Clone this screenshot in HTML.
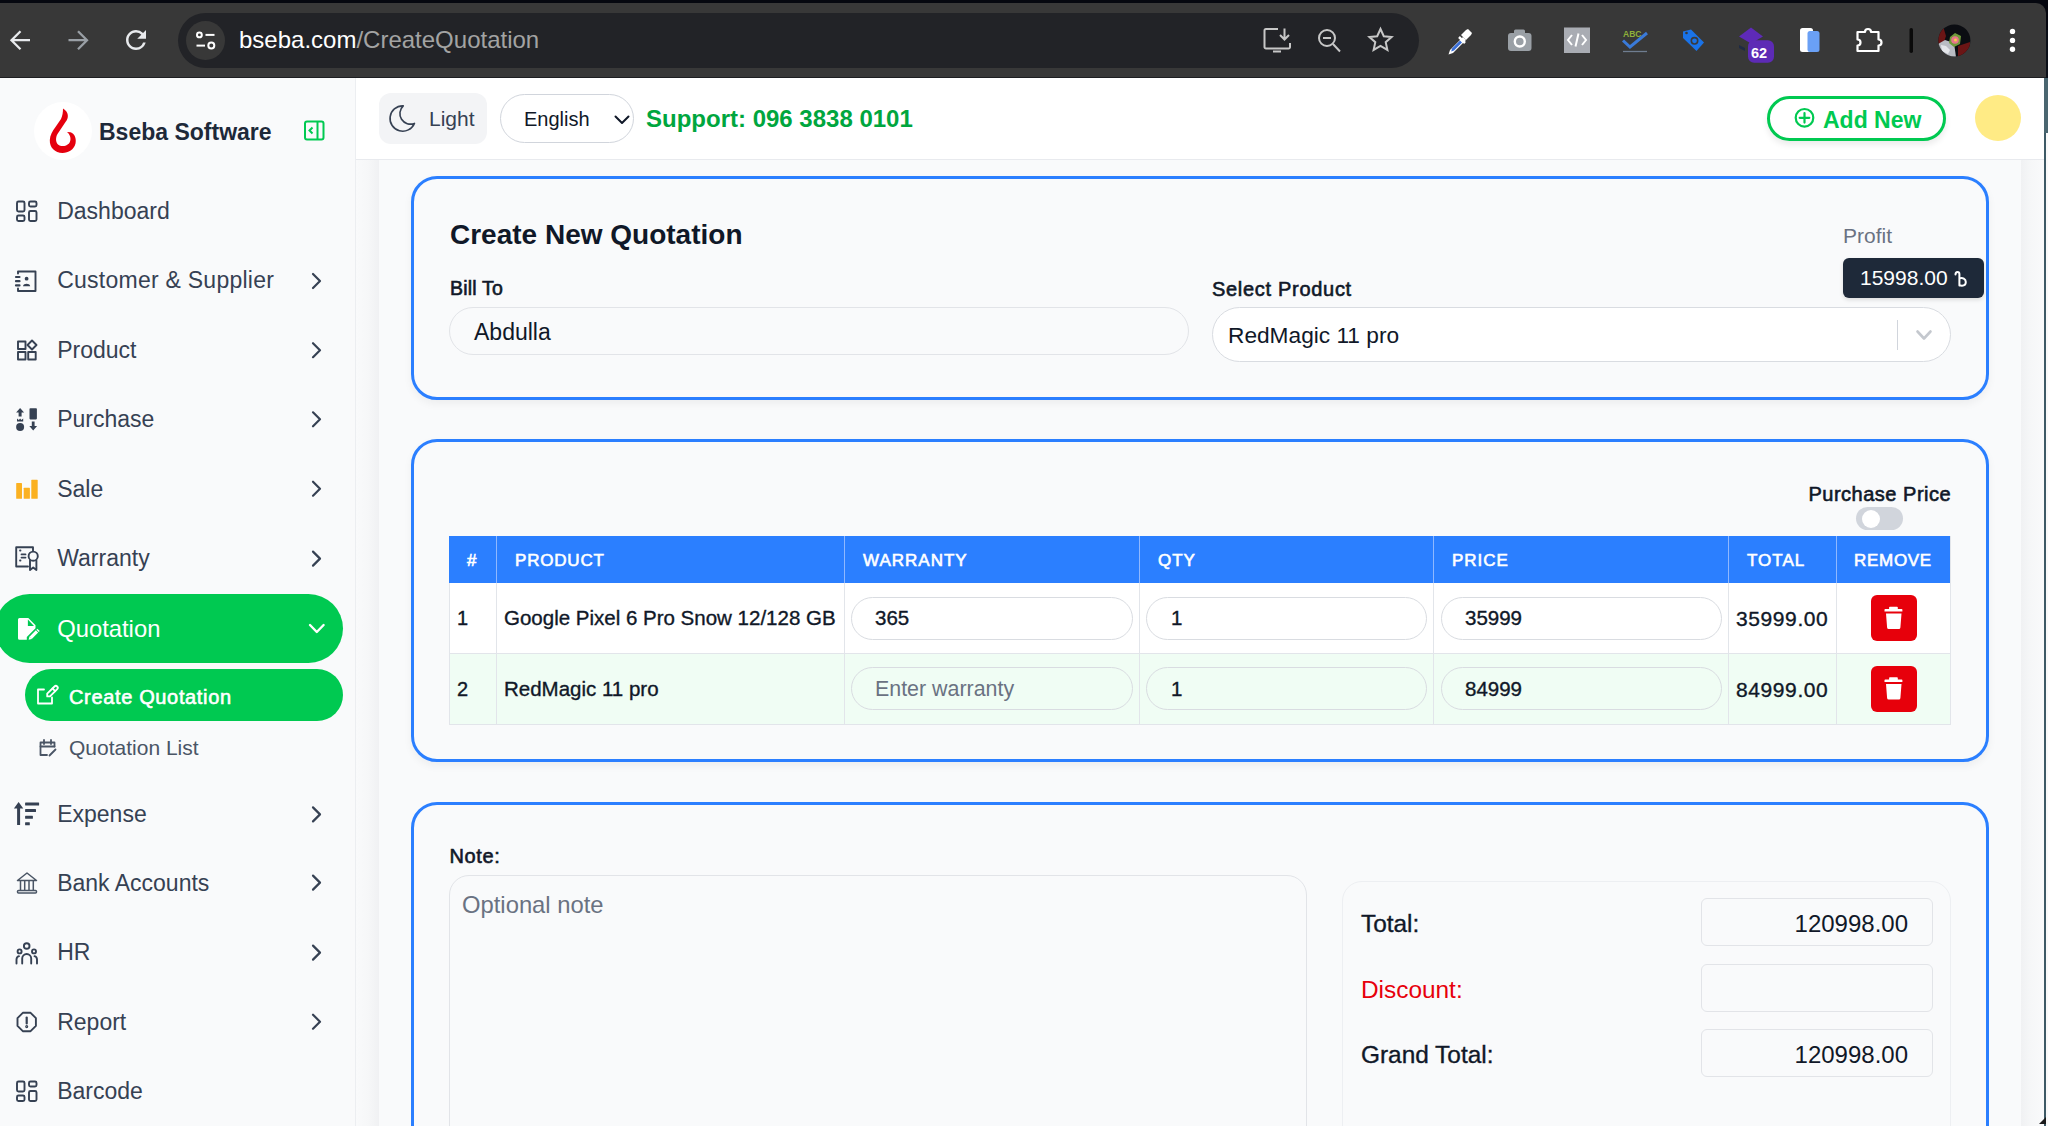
<!DOCTYPE html>
<html><head><meta charset="utf-8">
<style>
*{box-sizing:border-box;margin:0;padding:0}
html,body{width:2048px;height:1126px;overflow:hidden}
body{position:relative;background:#f9fafb;font-family:"Liberation Sans",sans-serif;color:#101828}
.a{position:absolute}
.t{position:absolute;white-space:nowrap;line-height:1}
.m{-webkit-text-stroke:0.35px currentColor}
.sb{-webkit-text-stroke:0.6px currentColor;font-weight:normal}
svg{position:absolute;overflow:visible}
</style></head><body>

<!-- ===== Browser chrome ===== -->
<div class="a" style="left:0;top:0;width:2048px;height:4px;background:#05070f"></div>
<div class="a" style="left:2045px;top:0;width:3px;height:78px;background:#0b0f18"></div>
<div class="a" style="left:2020px;top:0;width:28px;height:30px;background:#05070f"></div>
<div class="a" style="left:0;top:3px;width:2046px;height:75px;background:#383838;border-top-right-radius:10px;border-bottom:1px solid #1d1e21"></div>
<div class="a" style="left:178px;top:13px;width:1241px;height:55px;background:#222327;border-radius:27.5px"></div>
<div class="a" style="left:186px;top:21px;width:39px;height:39px;background:#383838;border-radius:50%"></div>
<svg style="left:0;top:0" width="2048" height="78" viewBox="0 0 2048 78">
<g stroke="#e8eaed" stroke-width="2.3" fill="none" stroke-linecap="butt">
<path d="M30 40.2H12.5M20.5 31.2L11.5 40.2L20.5 49.2"/>
</g>
<g stroke="#9aa0a6" stroke-width="2.3" fill="none"><path d="M68.5 40.2H86M78 31.2L87 40.2L78 49.2"/></g>
<g transform="translate(121,25) scale(1.25)"><path fill="#e8eaed" d="M17.65 6.35A7.958 7.958 0 0 0 12 4c-4.42 0-7.99 3.58-7.99 8s3.57 8 7.99 8c3.73 0 6.84-2.55 7.73-6h-2.08A5.99 5.99 0 0 1 12 18c-3.31 0-6-2.69-6-6s2.69-6 6-6c1.66 0 3.14.69 4.22 1.78L13 11h7V4l-2.35 2.35z"/></g>
<g stroke="#fff" stroke-width="2" fill="none">
<circle cx="199.4" cy="34.9" r="2.4"/><path d="M205.5 34.9H214.5"/>
<path d="M196.5 45.6H205"/><circle cx="211.3" cy="45.6" r="3"/>
</g>
<g stroke="#c7c7c7" stroke-width="2" fill="none">
<path d="M1278 29H1266a1.5 1.5 0 0 0-1.5 1.5v16.5a1.5 1.5 0 0 0 1.5 1.5h22.5a1.5 1.5 0 0 0 1.5-1.5V43"/>
<path d="M1284.5 28.5v11M1280 35l4.5 4.5L1289 35"/><path d="M1273 51.5h8"/>
<circle cx="1327" cy="38" r="8"/><path d="M1323 38h8M1333 44l7 7.5"/>
<path d="M1380.5 29l3.3 7.2l7.8 .8l-5.9 5.2l1.7 7.7l-6.9 -4l-6.9 4l1.7 -7.7l-5.9 -5.2l7.8 -.8z"/>
</g>
<g>
<path d="M1450 50l13-13 3 3-13 13-4.5 1.5z" fill="#fff"/>
<path d="M1452 48.5l8-8 2 2-8 8-2.8 .9z" fill="#3b6fd8"/>
<path d="M1461 35l5-5 2-1 4 4-1 2-5 5z" fill="#fff"/><path d="M1459 37l6 6" stroke="#fff" stroke-width="2.5"/>
</g>
<g><rect x="1508" y="33" width="23.5" height="18" rx="3" fill="#9aa0a6"/><rect x="1514" y="29.5" width="11" height="5" rx="1.5" fill="#9aa0a6"/><circle cx="1519.8" cy="41.5" r="5" fill="none" stroke="#fff" stroke-width="2.4"/></g>
<g><rect x="1564" y="27.5" width="26" height="25.5" fill="#a9acb3"/><path d="M1572 35l-4 5 4 5M1582 35l4 5-4 5M1578.5 33.5l-3 13" stroke="#fff" stroke-width="2" fill="none"/></g>
<g><text x="1623" y="37" font-family="Liberation Sans" font-weight="bold" font-size="8.5" fill="#8fb03a">ABC</text><path d="M1623 40.5l7 6.5 17-14" stroke="#3a7ad8" stroke-width="3" fill="none"/><path d="M1623 51.5h24" stroke="#6f7d90" stroke-width="1.3"/></g>
<g><path d="M1683 31.5l8-2 13 13-7.5 8.5-13.5-13z" fill="#1a73e8"/><circle cx="1694.5" cy="40.8" r="3.2" fill="none" stroke="#3a3a3a" stroke-width="1.6"/><circle cx="1686.5" cy="33" r="1.3" fill="#3a3a3a"/></g>
<g><path d="M1739 36.5l12-9l12 9l-12 7z" fill="#5e2ab8"/><path d="M1739 45l6 3v3l-6-3z" fill="#1f2a44"/><rect x="1748" y="40.3" width="26" height="22.5" rx="6" fill="#5d2bb5"/><text x="1751" y="58" font-family="Liberation Sans" font-weight="bold" font-size="14.5" fill="#fff">62</text></g>
<g><rect x="1800" y="28" width="13" height="24" rx="2.5" fill="#fff"/><rect x="1807.5" y="31" width="12" height="21" rx="2.5" fill="#6aa0f5"/></g>
<g><path d="M1857.5 32h7.5a3 3 0 0 1 6 0h7.5v7.5a3 3 0 0 1 0 6V51h-21v-5.5a3 3 0 0 0 0-6z" fill="none" stroke="#fff" stroke-width="2.2" stroke-linejoin="round"/></g>
<rect x="1909.5" y="28" width="3.5" height="25" rx="1.7" fill="#0a0a0a"/>
<g><defs><clipPath id="avc"><circle cx="1954.4" cy="40.4" r="16"/></clipPath></defs><g clip-path="url(#avc)">
<rect x="1938" y="24" width="33" height="33" fill="#0b0d12"/>
<path d="M1937 30l6-4 3 10-2 6-7 2z" fill="#6b1515"/>
<path d="M1958 46l12-4v15h-12z" fill="#6b1515"/>
<path d="M1938 44l7-4 9 3 2 14h-18z" fill="#b9bcc3"/>
<path d="M1941 45l5 1 4 4-2 4-6-3z" fill="#e4e6ea"/>
<path d="M1950 37l5-4 6 3-1 8-6 3-5-4z" fill="#6f9a3a"/>
<circle cx="1955" cy="40" r="3.8" fill="#e9758a"/><circle cx="1955.5" cy="40" r="1.5" fill="#f4d24a"/>
</g></g>
<g fill="#fff"><circle cx="2012.5" cy="31.4" r="2.7"/><circle cx="2012.5" cy="40.4" r="2.7"/><circle cx="2012.5" cy="49.3" r="2.7"/></g>
</svg>
<div class="t" style="left:239px;top:28px;font-size:24px;color:#fff">bseba.com<span style="color:#a3a3a3">/CreateQuotation</span></div>

<!-- ===== Page frame ===== -->
<div class="a" style="left:0;top:78px;width:356px;height:1048px;background:#f9fafb;border-right:1.5px solid #eceef1"></div>
<div class="a" style="left:356px;top:78px;width:1688px;height:82px;background:#fff;border-bottom:1px solid #e8eaee"></div>
<div class="a" style="left:356px;top:160px;width:23px;height:966px;background:linear-gradient(90deg,#f9fafb 0%,#f6f7f8 55%,#f0f1f3 100%)"></div>
<div class="a" style="left:2021px;top:160px;width:23px;height:966px;background:linear-gradient(90deg,#f0f1f3 0%,#f6f7f8 45%,#f9fafb 100%)"></div>
<div class="a" style="left:2044px;top:78px;width:2px;height:1048px;background:#3e5a66"></div>
<div class="a" style="left:2044px;top:78px;width:4px;height:55px;background:#4a6670"></div>
<div class="a" style="left:2046px;top:133px;width:2px;height:993px;background:#fafafa"></div>

<!-- ===== Header ===== -->
<div class="a" style="left:379px;top:93px;width:108px;height:51px;background:#f3f4f6;border-radius:12px"></div>
<div class="t" style="left:429px;top:108px;font-size:21px;color:#364153">Light</div>
<div class="a" style="left:500px;top:94px;width:134px;height:49px;background:#fff;border:1.5px solid #d1d5dc;border-radius:25px"></div>
<div class="t" style="left:524px;top:109px;font-size:20px;color:#101828">English</div>
<div class="t" style="left:646px;top:106.5px;font-size:24px;font-weight:bold;color:#00a63e">Support: 096 3838 0101</div>
<div class="a" style="left:1767px;top:96px;width:179px;height:45px;border:3px solid #00c951;border-radius:23px;background:#fff;box-shadow:0 4px 6px rgba(0,0,0,.08)"></div>
<div class="t" style="left:1823px;top:108.5px;font-size:23px;font-weight:bold;color:#00c951">Add New</div>
<div class="a" style="left:1975px;top:95px;width:46px;height:46px;background:#ffeb85;border-radius:50%"></div>

<!-- ===== Sidebar ===== -->
<div class="a" style="left:34px;top:102px;width:58px;height:58px;background:#fff;border-radius:50%"></div>
<div class="t" style="left:99px;top:120.5px;font-size:23px;font-weight:bold;color:#1e2939">Bseba Software</div>

<div class="t" style="left:57.2px;top:200.3px;font-size:23px;color:#364153">Dashboard</div>
<div class="t" style="left:57.2px;top:269.4px;font-size:23px;letter-spacing:0.25px;color:#364153">Customer &amp; Supplier</div>
<div class="t" style="left:57.2px;top:339px;font-size:23px;color:#364153">Product</div>
<div class="t" style="left:57.2px;top:408px;font-size:23px;color:#364153">Purchase</div>
<div class="t" style="left:57.2px;top:477.5px;font-size:23px;color:#364153">Sale</div>
<div class="t" style="left:57.2px;top:547.4px;font-size:23px;color:#364153">Warranty</div>

<div class="a" style="left:-5px;top:594px;width:348px;height:69px;background:#00c951;border-radius:35px"></div>
<div class="t" style="left:57.2px;top:617px;font-size:23.8px;color:#fff">Quotation</div>
<div class="a" style="left:25px;top:669px;width:318px;height:52px;background:#00c951;border-radius:26px"></div>
<div class="t sb" style="left:69px;top:686.5px;font-size:20px;letter-spacing:0.65px;color:#fff">Create Quotation</div>
<div class="t" style="left:69px;top:737px;font-size:21px;color:#4a5565">Quotation List</div>

<div class="t" style="left:57.2px;top:803px;font-size:23px;color:#364153">Expense</div>
<div class="t" style="left:57.2px;top:871.9px;font-size:23px;color:#364153">Bank Accounts</div>
<div class="t" style="left:57.2px;top:941.4px;font-size:23px;color:#364153">HR</div>
<div class="t" style="left:57.2px;top:1010.5px;font-size:23px;color:#364153">Report</div>
<div class="t" style="left:57.2px;top:1079.6px;font-size:23px;color:#364153">Barcode</div>

<svg style="left:0;top:78px" width="356" height="1048" viewBox="0 78 356 1048">
<path fill="#e5000e" d="M63 108.5C69 112 69 118 65.5 122L57.5 134C55.5 137.5 55.5 142 58 144.5C61 147 66 146.5 69 143.5C71.5 140.5 71 135 67 132L70.5 132.3C75 134 76.5 139 75.5 143.5C74 149.5 68.5 153 62.5 153C55 153 49.5 147.5 49.8 140C50 135 52.5 131 55.5 127L61 119C62.5 116 63 112 63 108.5Z"/>
<g stroke="#00c951" stroke-width="2" fill="none"><rect x="305" y="121.5" width="18.5" height="18" rx="2"/><path d="M317.5 121.5v18M312.5 127.5l-3 3 3 3"/></g>
<g stroke="#364153" stroke-width="1.9" fill="none" stroke-linejoin="round" stroke-linecap="round">
<!-- dashboard -->
<rect x="17" y="201.5" width="7.5" height="10" rx="1.5"/><rect x="29" y="201.5" width="7.5" height="5" rx="1.5"/>
<rect x="17" y="215.5" width="7.5" height="5.5" rx="1.5"/><rect x="29" y="211" width="7.5" height="10" rx="1.5"/>
<!-- customer -->
<path d="M18 273.5V271.5h17.5v19.5H18V288.5"/><path d="M16 277h3.5M16 281.2h3.5M16 285.4h3.5" stroke-width="2.2"/>
<circle cx="26.6" cy="278.7" r="1.9" fill="#364153" stroke="none"/><path d="M23 286.2c.6-3.2 6.6-3.2 7.2 0z" fill="#364153" stroke="none"/>
<!-- product -->
<rect x="18" y="341.5" width="7.5" height="7.5"/><path d="M32 340.5l4.5 4.5-4.5 4.5-4.5-4.5z"/>
<rect x="18" y="352" width="7.5" height="7.5"/><rect x="28.2" y="352" width="7.5" height="7.5"/>
<!-- warranty -->
<path d="M28 566.5H16.2V547.2h16.8v3.5"/><path d="M20 550.5h.5M20 560.5h.5M21.5 554.4h4M21.5 557.6h4" stroke-width="1.8"/>
<circle cx="33.2" cy="556.2" r="4.6"/><path d="M30 560.5v9.5l3.2-2.5 3.2 2.5v-9.5"/>
<!-- report -->
<path d="M22.8 1012.8h7.8l5.3 5.3v7.8l-5.3 5.3h-7.8l-5.3-5.3v-7.8z"/><path d="M26.7 1017.5v6" stroke-width="2.2"/><circle cx="26.7" cy="1026.6" r=".6" stroke-width="1.9"/>
<!-- barcode -->
<rect x="17" y="1081.5" width="7.5" height="10" rx="1.5"/><rect x="29" y="1081.5" width="7.5" height="5" rx="1.5"/>
<rect x="17" y="1095.5" width="7.5" height="5.5" rx="1.5"/><rect x="29" y="1091" width="7.5" height="10" rx="1.5"/>
</g>
<!-- purchase (filled) -->
<g fill="#364153">
<path d="M20.1 408l4 4.5h-2.5v4h-3v-4h-2.5z"/><path d="M17 418.5l1.8 1.5 1.3-1.5 1.3 1.5 1.8-1.5v3h-6.2z"/><circle cx="20.1" cy="427" r="4"/>
<rect x="29.5" y="408.2" width="7.4" height="11.2" rx=".8"/><path d="M31.8 421.5h2.8v4.5h2.5l-3.9 4.6-3.9-4.6h2.5z"/>
</g>
<!-- sale -->
<g fill="#fbb121"><rect x="16.2" y="483" width="5.8" height="15.8" rx=".6"/><rect x="23.7" y="487.7" width="6.2" height="11.1" rx=".6"/><rect x="31.3" y="479.8" width="6.4" height="19" rx=".6"/></g>
<!-- quotation (white filled) -->
<path fill="#fff" d="M19.5 618H28.3L35.5 625.2V628.3L26.8 637V639.7H19.5A1.5 1.5 0 0 1 18 638.2V619.5A1.5 1.5 0 0 1 19.5 618Z"/>
<path fill="#00c951" d="M27.9 619.6V625.9H34Z"/>
<path d="M30.6 637.8l6.4-6.4" stroke="#fff" stroke-width="3.3"/>
<path fill="#fff" d="M28.6 639.8l.9-3.2 2.3 2.3z"/>
<path d="M37.6 630.8l.9-.9" stroke="#fff" stroke-width="3.3"/>
<!-- create quotation -->
<g stroke="#fff" stroke-width="1.8" fill="none" stroke-linejoin="round" stroke-linecap="round">
<path d="M44 689.5h-6v14h14v-6"/><path d="M54.5 686.5a1.9 1.9 0 0 1 2.7 2.7l-7.2 7.2h-2.8v-2.8z"/><path d="M52.5 688.5l2.7 2.7"/>
</g>
<!-- quotation list -->
<g stroke="#4a5565" stroke-width="1.8" fill="none" stroke-linejoin="round" stroke-linecap="round">
<path d="M47 755H40.5V742.5h14v4"/><path d="M40.5 746.5h14M44 740v4M51 740v4"/><path d="M49.5 755.5l6-6"/>
</g>
<!-- expense -->
<g fill="#364153"><path d="M18.6 802l4.7 6.5h-3.2v16.4h-3V808.5h-3.2z"/><rect x="25.1" y="802.5" width="14" height="3" rx=".5"/><rect x="25.1" y="809.1" width="10.9" height="3" rx=".5"/><rect x="25.1" y="815.8" width="7.8" height="3" rx=".5"/><rect x="25.1" y="822.3" width="4.7" height="3" rx=".5"/></g>
<!-- bank -->
<g stroke="#4a5565" stroke-width="1.5" fill="none" stroke-linejoin="round">
<path d="M17.5 880.5h19l-9.5-7.5z"/><path d="M20.5 880.5v10M24.7 880.5v10M29 880.5v10M33.3 880.5v10"/><rect x="17.5" y="890.5" width="19" height="2.5" rx="1"/>
</g>
<!-- hr -->
<g stroke="#364153" stroke-width="1.9" fill="none" stroke-linecap="round">
<circle cx="26.7" cy="946" r="2.8"/><circle cx="19.6" cy="951.4" r="2"/><circle cx="34" cy="951.4" r="2"/>
<path d="M22.2 963.5v-5a4.5 4.5 0 0 1 9 0v5"/><path d="M16.5 963.5v-4a3.5 3.5 0 0 1 2.5-3.3M37 963.5v-4a3.5 3.5 0 0 0-2.5-3.3"/>
</g>
<!-- chevrons -->
<g stroke="#364153" stroke-width="2.2" fill="none" stroke-linecap="round" stroke-linejoin="round">
<path d="M313 274l7 7-7 7"/><path d="M313 343.2l7 7-7 7"/><path d="M313 412.3l7 7-7 7"/><path d="M313 481.7l7 7-7 7"/><path d="M313 551.6l7 7-7 7"/>
<path d="M313 807.4l7 7-7 7"/><path d="M313 875.6l7 7-7 7"/><path d="M313 945.6l7 7-7 7"/><path d="M313 1014.7l7 7-7 7"/>
</g>
<path d="M310 625l6.8 7 6.8-7" stroke="#fff" stroke-width="2.4" fill="none" stroke-linecap="round" stroke-linejoin="round"/>
</svg>
<!-- ===== Card 1 ===== -->
<div class="a" style="left:411px;top:176px;width:1578px;height:224px;border:3px solid #2b7fff;border-radius:26px;background:#f9fafb;box-shadow:0 4px 8px rgba(0,0,0,.05)"></div>
<div class="t" style="left:450px;top:221px;font-size:28px;font-weight:bold;color:#101828">Create New Quotation</div>
<div class="t sb" style="left:450px;top:279.2px;font-size:19.5px;letter-spacing:0.2px;color:#101828">Bill To</div>
<div class="a" style="left:449px;top:307px;width:740px;height:48px;border:1px solid #e2e4e8;border-radius:24px;background:#f9fafb"></div>
<div class="t" style="left:474px;top:320.5px;font-size:23px;color:#101828">Abdulla</div>
<div class="t sb" style="left:1212px;top:278.5px;font-size:20px;letter-spacing:0.7px;color:#101828">Select Product</div>
<div class="a" style="left:1212px;top:307px;width:739px;height:55px;border:1px solid #d9dce1;border-radius:28px;background:#fff"></div>
<div class="t" style="left:1228px;top:324px;font-size:22.7px;color:#101828">RedMagic 11 pro</div>
<div class="a" style="left:1897px;top:320px;width:1px;height:30px;background:#d1d5dc"></div>
<div class="t" style="left:1843px;top:225px;font-size:21px;color:#6a7282">Profit</div>
<div class="a" style="left:1843px;top:258px;width:141px;height:40px;background:#1e2939;border-radius:6px;box-shadow:0 2px 4px rgba(0,0,0,.12)"></div>
<div class="t" style="left:1860px;top:267px;font-size:21px;color:#fff">15998.00</div>
<svg style="left:1953px;top:270px" width="16" height="20" viewBox="0 0 16 20"><path d="M2.5 4.5c0-1.6 .9-2.5 2-2.5c1.1 0 1.9 .8 1.9 2V15.5M6.4 8.5c3.2-1.2 6.4 .5 6.4 3.6c0 2.4-1.8 3.6-3.8 3.6c-1.3 0-2-.2-2.6-.5" stroke="#fff" stroke-width="2" fill="none" stroke-linecap="round"/></svg>

<!-- ===== Card 2 ===== -->
<div class="a" style="left:411px;top:439px;width:1578px;height:323px;border:3px solid #2b7fff;border-radius:26px;background:#f9fafb;box-shadow:0 4px 8px rgba(0,0,0,.05)"></div>
<div class="t sb" style="left:1808.5px;top:484px;font-size:20px;letter-spacing:0.5px;color:#101828">Purchase Price</div>
<div class="a" style="left:1856px;top:507px;width:47px;height:23px;background:#d1d5dc;border-radius:12px"></div>
<div class="a" style="left:1862px;top:509.5px;width:18px;height:18px;background:#fff;border-radius:50%"></div>

<div class="a" style="left:449px;top:536px;width:1502px;height:47px;background:#2b7fff"></div>
<div class="a" style="left:449px;top:583px;width:1502px;height:71px;background:#fff"></div>
<div class="a" style="left:449px;top:654px;width:1502px;height:71px;background:#f0fdf4"></div>
<div class="a" style="left:449px;top:653px;width:1502px;height:1px;background:#e2e5ea"></div>
<div class="a" style="left:449px;top:724px;width:1502px;height:1px;background:#e2e5ea"></div>
<div class="a" style="left:449px;top:583px;width:1px;height:142px;background:#e2e5ea"></div>
<div class="a" style="left:1950px;top:536px;width:1px;height:189px;background:#e2e5ea"></div>
<div class="a" style="left:496px;top:536px;width:1px;height:47px;background:#8fb8ff"></div>
<div class="a" style="left:496px;top:583px;width:1px;height:142px;background:#e2e5ea"></div>
<div class="a" style="left:844px;top:536px;width:1px;height:47px;background:#8fb8ff"></div>
<div class="a" style="left:844px;top:583px;width:1px;height:142px;background:#e2e5ea"></div>
<div class="a" style="left:1139px;top:536px;width:1px;height:47px;background:#8fb8ff"></div>
<div class="a" style="left:1139px;top:583px;width:1px;height:142px;background:#e2e5ea"></div>
<div class="a" style="left:1433px;top:536px;width:1px;height:47px;background:#8fb8ff"></div>
<div class="a" style="left:1433px;top:583px;width:1px;height:142px;background:#e2e5ea"></div>
<div class="a" style="left:1728px;top:536px;width:1px;height:47px;background:#8fb8ff"></div>
<div class="a" style="left:1728px;top:583px;width:1px;height:142px;background:#e2e5ea"></div>
<div class="a" style="left:1836px;top:536px;width:1px;height:47px;background:#8fb8ff"></div>
<div class="a" style="left:1836px;top:583px;width:1px;height:142px;background:#e2e5ea"></div>
<div class="t sb" style="left:467px;top:552px;font-size:17px;letter-spacing:1px;color:#fff">#</div>
<div class="t sb" style="left:515px;top:552px;font-size:17px;letter-spacing:0.8px;color:#fff">PRODUCT</div>
<div class="t sb" style="left:863px;top:552px;font-size:17px;letter-spacing:1px;color:#fff">WARRANTY</div>
<div class="t sb" style="left:1158px;top:552px;font-size:17px;letter-spacing:1px;color:#fff">QTY</div>
<div class="t sb" style="left:1452px;top:552px;font-size:17px;letter-spacing:1px;color:#fff">PRICE</div>
<div class="t sb" style="left:1747px;top:552px;font-size:17px;letter-spacing:1px;color:#fff">TOTAL</div>
<div class="t sb" style="left:1854px;top:552px;font-size:17px;letter-spacing:0.7px;color:#fff">REMOVE</div>
<div class="a" style="left:851px;top:597px;width:282px;height:43px;border:1px solid #d9dce1;border-radius:22px;background:#fff"></div>
<div class="a" style="left:1146px;top:597px;width:281px;height:43px;border:1px solid #d9dce1;border-radius:22px;background:#fff"></div>
<div class="a" style="left:1441px;top:597px;width:281px;height:43px;border:1px solid #d9dce1;border-radius:22px;background:#fff"></div>
<div class="a" style="left:851px;top:667px;width:282px;height:43px;border:1px solid #d9dce1;border-radius:22px;background:transparent"></div>
<div class="a" style="left:1146px;top:667px;width:281px;height:43px;border:1px solid #d9dce1;border-radius:22px;background:transparent"></div>
<div class="a" style="left:1441px;top:667px;width:281px;height:43px;border:1px solid #d9dce1;border-radius:22px;background:transparent"></div>
<div class="t m" style="left:457px;top:608px;font-size:20px;color:#101828">1</div>
<div class="t m" style="left:504px;top:608px;font-size:20.5px;color:#101828">Google Pixel 6 Pro Snow 12/128 GB</div>
<div class="t m" style="left:875px;top:608px;font-size:20.5px;color:#101828">365</div>
<div class="t m" style="left:1171px;top:608px;font-size:20.5px;color:#101828">1</div>
<div class="t m" style="left:1465px;top:608px;font-size:20.5px;color:#101828">35999</div>
<div class="t m" style="left:1736px;top:608px;font-size:21px;letter-spacing:0.6px;color:#101828">35999.00</div>
<div class="t m" style="left:457px;top:679px;font-size:20px;color:#101828">2</div>
<div class="t m" style="left:504px;top:679px;font-size:20.5px;color:#101828">RedMagic 11 pro</div>
<div class="t" style="left:875px;top:679px;font-size:21.4px;color:#6a7282">Enter warranty</div>
<div class="t m" style="left:1171px;top:679px;font-size:20.5px;color:#101828">1</div>
<div class="t m" style="left:1465px;top:679px;font-size:20.5px;color:#101828">84999</div>
<div class="t m" style="left:1736px;top:679px;font-size:21px;letter-spacing:0.6px;color:#101828">84999.00</div>
<div class="a" style="left:1871px;top:595px;width:46px;height:46px;background:#e7000b;border-radius:6px"></div>
<div class="a" style="left:1871px;top:666px;width:46px;height:46px;background:#e7000b;border-radius:6px"></div>

<!-- ===== Card 3 ===== -->
<div class="a" style="left:411px;top:802px;width:1578px;height:400px;border:3px solid #2b7fff;border-radius:26px;background:#f9fafb"></div>
<div class="t sb" style="left:449.5px;top:846px;font-size:20px;letter-spacing:0.6px;color:#101828">Note:</div>
<div class="a" style="left:449px;top:875px;width:858px;height:300px;border:1px solid #e2e4e8;border-radius:20px;background:#f9fafb"></div>
<div class="t" style="left:462px;top:893px;font-size:23.8px;color:#6a7282">Optional note</div>
<div class="a" style="left:1342px;top:881px;width:609px;height:300px;border:1px solid #edeff2;border-radius:20px;background:#f9fafb"></div>
<div class="t m" style="left:1361px;top:912px;font-size:24.4px;color:#101828">Total:</div>
<div class="a" style="left:1701px;top:898px;width:232px;height:48px;border:1px solid #e2e4e8;border-radius:6px;background:#f9fafb"></div>
<div class="t" style="left:1700px;width:208px;text-align:right;top:912px;font-size:24px;color:#101828">120998.00</div>
<div class="t" style="left:1361px;top:978px;font-size:24.4px;color:#e7000b">Discount:</div>
<div class="a" style="left:1701px;top:964px;width:232px;height:48px;border:1px solid #e2e4e8;border-radius:6px;background:#f9fafb"></div>
<div class="t m" style="left:1361px;top:1043px;font-size:24.4px;color:#101828">Grand Total:</div>
<div class="a" style="left:1701px;top:1029px;width:232px;height:48px;border:1px solid #e2e4e8;border-radius:6px;background:#f9fafb"></div>
<div class="t" style="left:1700px;width:208px;text-align:right;top:1043px;font-size:24px;color:#101828">120998.00</div>

<svg style="left:356px;top:78px" width="1692" height="1048" viewBox="356 78 1692 1048">
<g transform="translate(385.8,101.6) scale(1.41)"><path d="M12 3c.132 0 .263 0 .393 0a7.5 7.5 0 0 0 7.92 12.446a9 9 0 1 1 -8.313 -12.454z" fill="none" stroke="#364153" stroke-width="1.15" stroke-linejoin="round"/></g>
<path d="M615.5 116.5l6.5 6.5 6.5-6.5" stroke="#101828" stroke-width="2" fill="none" stroke-linecap="round" stroke-linejoin="round"/>
<g stroke="#00c951" stroke-width="2.2" fill="none" stroke-linecap="round"><circle cx="1804.5" cy="117.8" r="8.8"/><path d="M1804.5 113v9.6M1799.7 117.8h9.6"/></g>
<path d="M1917.5 331.5l6.5 7 6.5-7" stroke="#c4c8ce" stroke-width="2.6" fill="none" stroke-linecap="round" stroke-linejoin="round"/>
<g fill="#fff">
<path d="M1890.5 606.7h6.5a.8.8 0 0 1 .8.8v1.6h3.9a.7.7 0 0 1 .7.7v1.7h-17.9v-1.7a.7.7 0 0 1 .7-.7h3.9v-1.6a.8.8 0 0 1 .8-.8z"/>
<path d="M1886 613.5h15.5l-1.1 14a1.6 1.6 0 0 1-1.6 1.5h-10.1a1.6 1.6 0 0 1-1.6-1.5z"/>
<path d="M1890.5 677.2h6.5a.8.8 0 0 1 .8.8v1.6h3.9a.7.7 0 0 1 .7.7v1.7h-17.9v-1.7a.7.7 0 0 1 .7-.7h3.9v-1.6a.8.8 0 0 1 .8-.8z"/>
<path d="M1886 684h15.5l-1.1 14a1.6 1.6 0 0 1-1.6 1.5h-10.1a1.6 1.6 0 0 1-1.6-1.5z"/>
</g>
</svg>
<svg style="left:2036px;top:1114px" width="12" height="12" viewBox="0 0 12 12"><path d="M10 3L3 10h7z" fill="#1a1a1a"/></svg>
</body></html>
